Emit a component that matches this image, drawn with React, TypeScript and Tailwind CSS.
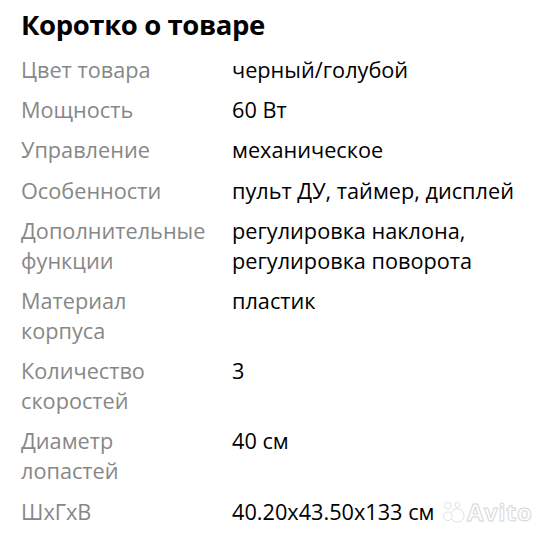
import React from "react";

const rows: { label: string[]; value: string[] }[] = [
  { label: ["Цвет товара"], value: ["черный/голубой"] },
  { label: ["Мощность"], value: ["60 Вт"] },
  { label: ["Управление"], value: ["механическое"] },
  { label: ["Особенности"], value: ["пульт ДУ, таймер, дисплей"] },
  { label: ["Дополнительные", "функции"], value: ["регулировка наклона,", "регулировка поворота"] },
  { label: ["Материал", "корпуса"], value: ["пластик"] },
  { label: ["Количество", "скоростей"], value: ["3"] },
  { label: ["Диаметр", "лопастей"], value: ["40 см"] },
  { label: ["ШхГхВ"], value: ["40.20x43.50x133 см"] },
];

export default function App() {
  return (
    <div
      className="relative w-[539px] h-[540px] bg-white overflow-hidden"
      style={{ fontFamily: '"Open Sans", sans-serif' }}
    >
      <div className="pl-[21px] pt-[7px]">
        <h1 className="text-[27.5px] leading-[36px] font-bold text-black tracking-[-0.4px]">
          Коротко о товаре
        </h1>
        <div className="flex flex-col gap-[10.2px] mt-[12px]">
          {rows.map((r, i) => (
            <div key={i} className="flex text-[21.7px] leading-[30px]">
              <div className="w-[211px] text-[#878787]">
                {r.label.map((l, j) => (
                  <div key={j}>{l}</div>
                ))}
              </div>
              <div className="text-black">
                {r.value.map((l, j) => (
                  <div key={j}>{l}</div>
                ))}
              </div>
            </div>
          ))}
        </div>
      </div>
      <div className="absolute left-[443px] top-[500px] flex items-center gap-[1px] opacity-90">
        <svg width="23" height="23" viewBox="0 0 24 24">
          <circle cx="15" cy="15" r="7" fill="#fff" stroke="#dcdcdc" strokeWidth="1" />
          <circle cx="5" cy="5" r="3.5" fill="#fff" stroke="#dcdcdc" strokeWidth="1" />
          <circle cx="15" cy="4" r="2.5" fill="#fff" stroke="#dcdcdc" strokeWidth="1" />
          <circle cx="5" cy="16" r="4.5" fill="#fff" stroke="#dcdcdc" strokeWidth="1" />
        </svg>
        <span
          className="text-[24px] leading-[24px] font-bold text-white tracking-[0.5px]"
          style={{ WebkitTextStroke: "1px #d4d4d4" }}
        >
          Avito
        </span>
      </div>
    </div>
  );
}
